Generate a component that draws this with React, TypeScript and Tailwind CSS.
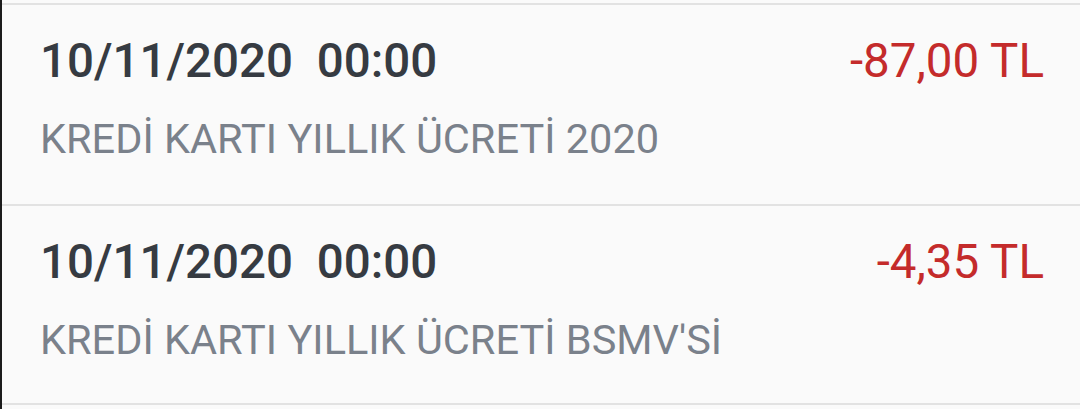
const rows = [
  { date: "10/11/2020  00:00", desc: "KREDİ KARTI YILLIK ÜCRETİ 2020", amount: "-87,00 TL" },
  { date: "10/11/2020  00:00", desc: "KREDİ KARTI YILLIK ÜCRETİ BSMV'Sİ", amount: "-4,35 TL" },
];

export default function App() {
  return (
    <div
      className="h-[409px] w-[1080px] overflow-hidden bg-[#fafafa] border-l-2 border-[#1c1c1c] pt-[3px]"
      style={{ fontFamily: "Roboto, 'Noto Sans', sans-serif" }}
    >
      {rows.map((r, i) => (
        <div
          key={i}
          className={
            i === rows.length - 1
              ? "h-[201px] border-t-2 border-b-2 border-[#e2e2e2] pl-[38px] pr-[36px] pt-[33px]"
              : "h-[201px] border-t-2 border-[#e2e2e2] pl-[38px] pr-[36px] pt-[33px]"
          }
        >
          <div className="flex items-start justify-between">
            <span className="whitespace-pre text-[47.5px] leading-none font-medium text-[#363b42]">
              {r.date}
            </span>
            <span className="text-[47.5px] leading-none text-[#c42b2b]">{r.amount}</span>
          </div>
          <div className="mt-[32px] text-[41.5px] leading-none text-[#7a818b]">{r.desc}</div>
        </div>
      ))}
    </div>
  );
}
